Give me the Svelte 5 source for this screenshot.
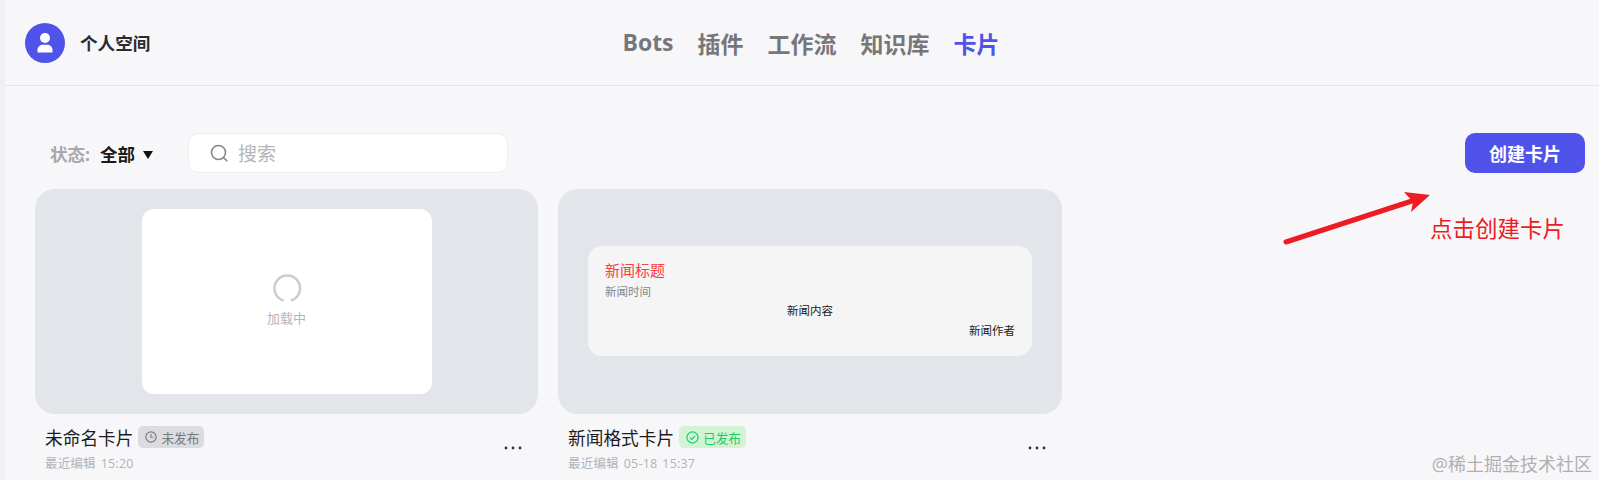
<script>
  const tabs = [
    { label: "Bots" },
    { label: "插件" },
    { label: "工作流" },
    { label: "知识库" },
    { label: "卡片", active: true }
  ];
</script>

<div class="page">
  <header class="topbar">
    <div class="space">
      <span class="avatar">
        <svg viewBox="0 0 40 40" width="40" height="40">
          <circle cx="20" cy="15" r="5" fill="#fff" />
          <path d="M12.5 29.5v-2.5c0-3.2 2.6-5.2 5.5-5.2h4c2.9 0 5.500 2 5.500 5.200v2.500z" fill="#fff" />
        </svg>
      </span>
      <span class="space-name">个人空间</span>
    </div>
    <nav class="tabs">
      {#each tabs as tab}
        <span class="tab" class:active={tab.active}>{tab.label}</span>
      {/each}
    </nav>
  </header>

  <main class="content">
    <div class="toolbar">
      <div class="status">
        <span class="status-label">状态:</span>
        <span class="status-value">全部</span>
        <span class="caret"></span>
      </div>
      <div class="search">
        <svg viewBox="0 0 20 20" width="20" height="20" fill="none" stroke="#85858a" stroke-width="1.6">
          <circle cx="9.500" cy="9.500" r="7" />
          <path d="M14.800 14.800l3 3" stroke-linecap="round" />
        </svg>
        <span class="placeholder">搜索</span>
      </div>
      <button class="create">创建卡片</button>
    </div>

    <div class="cards">
      <article class="card">
        <div class="preview">
          <div class="loading-box">
            <svg class="spinner" viewBox="0 0 30 30" width="30" height="30" fill="none" stroke="#cbcbd0" stroke-width="2.500">
              <path d="M11.500 27.500a12.800 12.800 0 1 1 7.500 0" />
            </svg>
            <span class="loading-text">加载中</span>
          </div>
        </div>
        <div class="meta">
          <div class="meta-text">
            <div class="title-row">
              <span class="title">未命名卡片</span>
              <span class="badge draft">
                <svg viewBox="0 0 14 14" width="12" height="12" fill="none" stroke="currentColor" stroke-width="1.300">
                  <circle cx="7" cy="7" r="6" />
                  <path d="M7 3.800v3.500h2.600" />
                </svg>
                未发布
              </span>
            </div>
            <div class="edited">最近编辑 15:20</div>
          </div>
          <svg class="more" viewBox="0 0 18 4" width="18" height="4" fill="#333">
            <circle cx="2" cy="2" r="1.400" />
            <circle cx="9" cy="2" r="1.400" />
            <circle cx="16" cy="2" r="1.400" />
          </svg>
        </div>
      </article>

      <article class="card">
        <div class="preview">
          <div class="news">
            <div class="news-title">新闻标题</div>
            <div class="news-time">新闻时间</div>
            <div class="news-body">新闻内容</div>
            <div class="news-author">新闻作者</div>
          </div>
        </div>
        <div class="meta">
          <div class="meta-text">
            <div class="title-row">
              <span class="title">新闻格式卡片</span>
              <span class="badge done">
                <svg viewBox="0 0 14 14" width="13" height="13" fill="none" stroke="currentColor" stroke-width="1.300">
                  <circle cx="7" cy="7" r="6" />
                  <path d="M4.300 7.200l1.900 1.900 3.500-3.800" />
                </svg>
                已发布
              </span>
            </div>
            <div class="edited">最近编辑 05-18 15:37</div>
          </div>
          <svg class="more" viewBox="0 0 18 4" width="18" height="4" fill="#333">
            <circle cx="2" cy="2" r="1.400" />
            <circle cx="9" cy="2" r="1.400" />
            <circle cx="16" cy="2" r="1.400" />
          </svg>
        </div>
      </article>
    </div>
  </main>

  <svg class="arrow" viewBox="0 0 160 60" width="160" height="60">
    <path d="M6 55L135 13" stroke="#ed1c24" stroke-width="5" stroke-linecap="round" />
    <path d="M124 5L150 8 131 25 133 15z" fill="#ed1c24" />
  </svg>
  <span class="hint">点击创建卡片</span>
  <span class="watermark">@稀土掘金技术社区</span>
</div>

<style>
  :global(body) {
    margin: 0;
    background: #f0f0f3;
  }
  .page {
    position: relative;
    height: 480px;
    margin-left: 5px;
    overflow: hidden;
    background: #f7f7fa;
    font-family: "Open Sans", "Noto Sans CJK SC", sans-serif;
  }
  .topbar {
    box-sizing: border-box;
    height: 86px;
    display: grid;
    grid-template-columns: 1fr auto 1fr;
    align-items: center;
    padding: 0 0 0 20px;
    border-bottom: 1px solid #e6e6ea;
  }
  .space {
    display: flex;
    align-items: center;
    gap: 15px;
  }
  .avatar {
    width: 40px;
    height: 40px;
    border-radius: 50%;
    background: #4f53ea;
  }
  .avatar svg {
    display: block;
  }
  .space-name {
    font-size: 17.600px;
    font-weight: 700;
    color: #2b2b30;
  }
  .tabs {
    display: flex;
    gap: 24px;
    transform: translateX(-1px);
  }
  .tab {
    font-size: 23px;
    font-weight: 700;
    color: #77777a;
  }
  .tab.active {
    color: #4f53ea;
  }
  .content {
    padding: 47px 14px 0 30px;
  }
  .toolbar {
    display: flex;
    align-items: center;
    height: 40px;
  }
  .status {
    display: flex;
    align-items: center;
    width: 153px;
    padding-left: 15px;
    box-sizing: border-box;
    font-size: 17.500px;
    font-weight: 700;
  }
  .status-label {
    color: #a8a8ac;
    margin-right: 10px;
  }
  .status-value {
    color: #1a1a1a;
    margin-right: 8px;
  }
  .caret {
    width: 0;
    height: 0;
    margin-top: 3px;
    border-left: 5px solid transparent;
    border-right: 5px solid transparent;
    border-top: 8px solid #111;
  }
  .search {
    box-sizing: border-box;
    width: 320px;
    height: 40px;
    display: flex;
    align-items: center;
    gap: 9px;
    padding-left: 20px;
    background: #fff;
    border: 1px solid #eeeef1;
    border-radius: 10px;
  }
  .placeholder {
    font-size: 19px;
    color: #b5b5b9;
  }
  .create {
    margin-left: auto;
    width: 120px;
    height: 40px;
    border: 0;
    border-radius: 10px;
    background: #4f53ea;
    color: #fff;
    font: 700 18px "Open Sans", "Noto Sans CJK SC", sans-serif;
  }
  .cards {
    display: grid;
    grid-template-columns: 503px 504px;
    gap: 20px;
    margin-top: 16px;
  }
  .preview {
    height: 225px;
    display: flex;
    align-items: center;
    justify-content: center;
    background: #e2e5ea;
    border-radius: 20px;
  }
  .loading-box {
    box-sizing: border-box;
    width: 290px;
    height: 185px;
    padding-bottom: 4px;
    display: flex;
    flex-direction: column;
    align-items: center;
    justify-content: center;
    gap: 5px;
    background: #fff;
    border-radius: 12px;
  }
  .spinner {
    display: block;
  }
  .loading-text {
    font-size: 13px;
    color: #b4b4b8;
  }
  .news {
    box-sizing: border-box;
    width: 444px;
    height: 110px;
    margin-bottom: 2px;
    padding: 13px 17px;
    background: #f5f5f5;
    border-radius: 14px;
    font-size: 11.500px;
    line-height: 20px;
    color: #222;
  }
  .news-title {
    font-size: 15px;
    line-height: 23px;
    color: #fa4040;
  }
  .news-time {
    color: #888;
    line-height: 19px;
  }
  .news-body {
    text-align: center;
  }
  .news-author {
    text-align: right;
  }
  .meta {
    display: flex;
    justify-content: space-between;
    padding: 10px 16px 0 10px;
  }
  .title-row {
    display: flex;
    align-items: center;
    gap: 5px;
  }
  .title {
    font-size: 17.700px;
    color: #1c1c20;
  }
  .badge {
    display: flex;
    align-items: center;
    height: 22px;
    padding: 0 5px 0 7px;
    border-radius: 5px;
    font-size: 12.600px;
  }
  .badge.draft {
    gap: 4px;
    background: #dcdce0;
    color: #77777c;
  }
  .badge.done {
    gap: 4px;
    background: #d2f4d5;
    color: #1fc96a;
  }
  .edited {
    margin-top: 3px;
    font-size: 12.500px;
    letter-spacing: 0.2px;
    word-spacing: 1.500px;
    color: #b2b2b6;
  }
  .more {
    margin-top: 22px;
  }
  .arrow {
    position: absolute;
    left: 1275px;
    top: 187px;
  }
  .hint {
    position: absolute;
    left: 1425px;
    top: 211px;
    font-size: 22.500px;
    color: #ed1c24;
  }
  .watermark {
    position: absolute;
    right: 7px;
    bottom: 4px;
    font-size: 18px;
    color: #b0b0b0;
  }
</style>
